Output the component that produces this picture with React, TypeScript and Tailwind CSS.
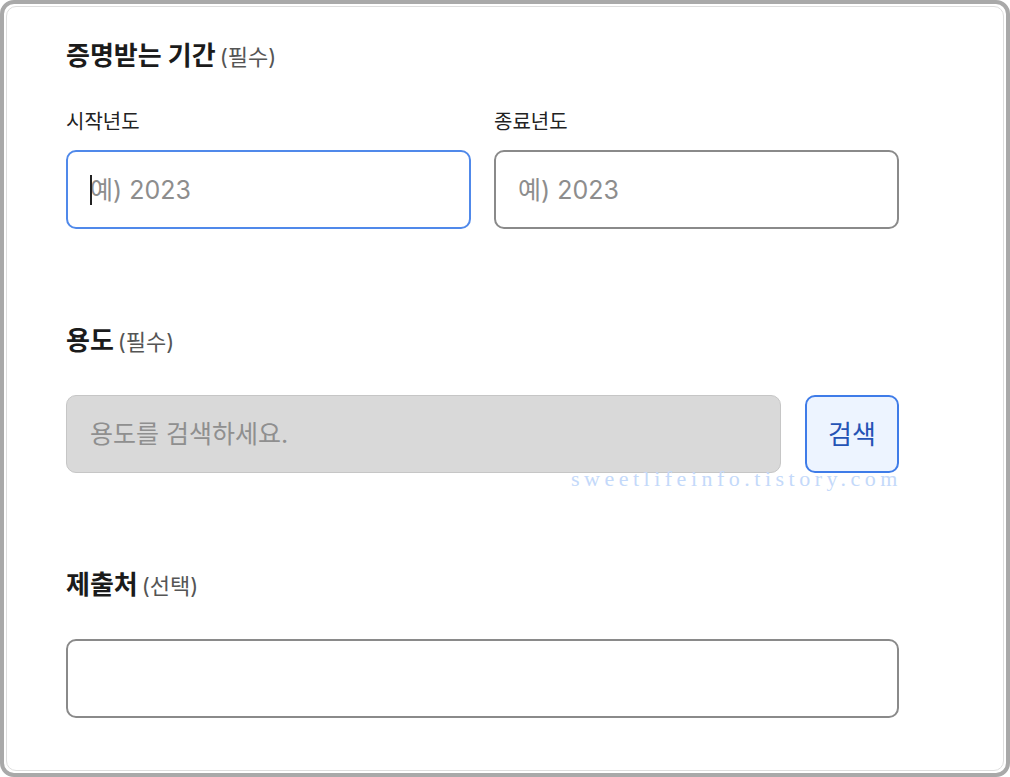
import React from "react";

function Heading({ title, note }: { title: string; note: string }) {
  return (
    <div className="flex h-[32px] items-baseline gap-[4px] leading-[32px]">
      <span className="text-[26px] font-bold text-[#1b1b1b]">{title}</span>
      <span className="text-[22px] font-normal text-[#555555]">{note}</span>
    </div>
  );
}

function Field({ label, focused }: { label: string; focused?: boolean }) {
  return (
    <div className="flex flex-col">
      <div className="h-[26px] text-[20px] leading-[26px] text-[#222222]">{label}</div>
      <div className="relative mt-[15px] h-[79px]">
        <input
          type="text"
          placeholder="예) 2023"
          className={
            focused
              ? "h-full w-full rounded-[10px] border-2 border-[#5089ea] bg-white px-[22px] text-[25px] text-[#222] outline-none placeholder:text-[#8d8d8d]"
              : "h-full w-full rounded-[10px] border-2 border-[#8a8a8a] bg-white px-[22px] text-[25px] text-[#222] outline-none placeholder:text-[#8d8d8d]"
          }
        />
        {focused && (
          <span className="absolute left-[24px] top-[25px] h-[30px] w-[1.5px] bg-[#222222]" />
        )}
      </div>
    </div>
  );
}

export default function App() {
  return (
    <div className="h-[777px] w-[1010px] bg-white font-[Inter,'Noto_Sans_CJK_KR',sans-serif]">
      <div className="h-full rounded-[14px] border-[4px] border-[#a9a9a9] bg-white p-[2px]">
        <div className="h-full rounded-[10px] border border-[#dedede] pl-[59px] pt-[33px]">
          <div className="w-[833px]">
            <Heading title="증명받는 기간" note="(필수)" />
            <div className="mt-[37px] grid grid-cols-2 gap-[23px]">
              <Field label="시작년도" focused />
              <Field label="종료년도" />
            </div>

            <div className="mt-[96px]">
              <Heading title="용도" note="(필수)" />
            </div>
            <div className="relative mt-[38px] flex h-[78px] gap-[24px]">
              <input
                type="text"
                placeholder="용도를 검색하세요."
                className="h-full flex-1 rounded-[10px] border-[1.5px] border-[#c6c6c6] bg-[#d9d9d9] px-[23px] text-[25px] text-[#222] outline-none placeholder:text-[#8f8f8f]"
              />
              <button className="h-full w-[94px] rounded-[10px] border-2 border-[#3f7ce8] bg-[#edf4ff] text-[26px] text-[#2553b5]">
                검색
              </button>
              <span className="pointer-events-none absolute right-[-3px] top-[73px] font-['Liberation_Serif',serif] text-[22px] leading-[22px] tracking-[4.5px] text-[#c4d9fa]">
                sweetlifeinfo.tistory.com
              </span>
            </div>

            <div className="mt-[96px]">
              <Heading title="제출처" note="(선택)" />
            </div>
            <div className="mt-[38px] h-[79px]">
              <input
                type="text"
                className="h-full w-full rounded-[10px] border-2 border-[#8a8a8a] bg-white px-[22px] text-[22px] outline-none"
              />
            </div>
          </div>
        </div>
      </div>
    </div>
  );
}
